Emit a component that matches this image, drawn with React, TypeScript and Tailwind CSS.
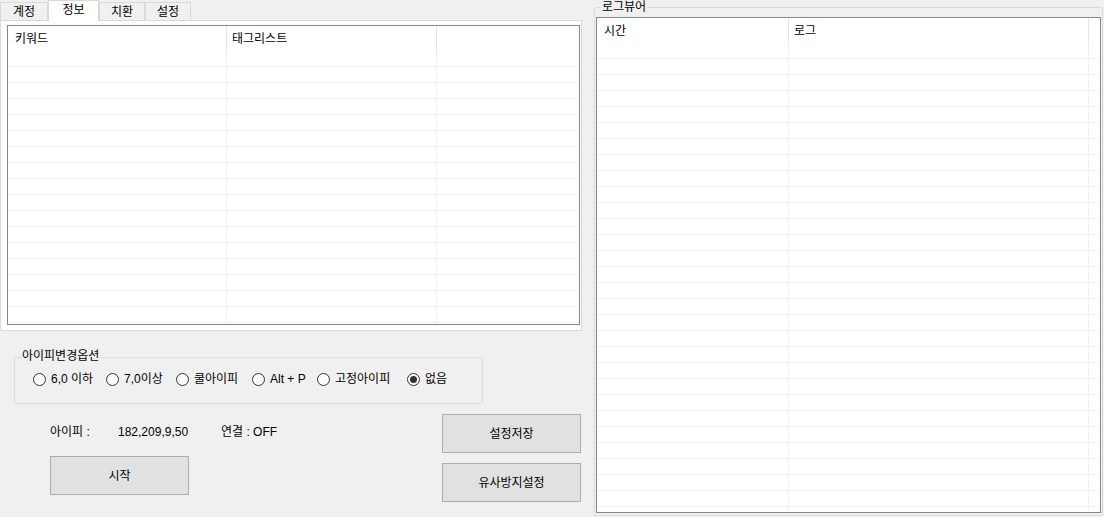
const leftRows = Array.from({ length: 18 });
const rightRows = Array.from({ length: 31 });

const radios = [
  { label: "6,0 이하", w: "w-[73px]" },
  { label: "7,0이상", w: "w-[70px]" },
  { label: "쿨아이피", w: "w-[76px]" },
  { label: "Alt + P", w: "w-[65px]" },
  { label: "고정아이피", w: "w-[90px]" },
  { label: "없음", w: "w-[60px]", checked: true },
];

function Tab({ label, active, w }: { label: string; active?: boolean; w: string }) {
  if (active) {
    return (
      <div
        className={`${w} relative z-10 -mb-px flex h-[21px] items-start justify-center border border-b-0 border-[#d9d9d9] bg-white pt-[3px] leading-[12px]`}
      >
        {label}
      </div>
    );
  }
  return (
    <div
      className={`${w} flex h-[18px] items-center justify-center border border-b-0 border-[#d9d9d9] bg-[#f0f0f0] pt-px leading-[12px]`}
    >
      {label}
    </div>
  );
}

function Button({ label }: { label: string }) {
  return (
    <div className="flex h-[39px] w-[139px] items-center justify-center border border-[#adadad] bg-[#e1e1e1] leading-[12px]">
      {label}
    </div>
  );
}

function Radio({ checked }: { checked?: boolean }) {
  return (
    <span className="flex h-[13px] w-[13px] shrink-0 items-center justify-center rounded-full border border-[#333333] bg-white">
      {checked && <span className="h-[7px] w-[7px] rounded-full bg-[#333333]" />}
    </span>
  );
}

export default function App() {
  return (
    <div className="flex h-[517px] w-[1104px] overflow-hidden bg-[#f0f0f0] font-['Liberation_Sans','Noto_Sans_CJK_KR',sans-serif] text-[12px] text-black">
      {/* left side */}
      <div className="flex w-[583px] shrink-0 flex-col">
        <div className="flex h-[20px] items-end">
          <Tab label="계정" w="w-[48px]" />
          <Tab label="정보" w="w-[51px]" active />
          <Tab label="치환" w="w-[46px]" />
          <Tab label="설정" w="w-[46px]" />
        </div>

        <div className="h-[311px] w-[582px] border border-[#d9d9d9] bg-white pl-[6px] pt-[4px]">
          <div className="h-[300px] w-[573px] overflow-hidden border border-[#828790] bg-white">
            <div className="flex h-[25px]">
              <div className="w-[219px] shrink-0 border-r border-[#e5e5e5] pl-[7px] pt-[7px] leading-[12px]">키워드</div>
              <div className="w-[210px] shrink-0 border-r border-[#e5e5e5] pl-[5px] pt-[7px] leading-[12px]">태그리스트</div>
              <div className="flex-1" />
            </div>
            {leftRows.map((_, i) => (
              <div key={i} className="flex h-[16px] border-b border-[#f0f0f0]">
                <div className="w-[219px] shrink-0 border-r border-[#f0f0f0]" />
                <div className="w-[210px] shrink-0 border-r border-[#f0f0f0]" />
                <div className="flex-1" />
              </div>
            ))}
          </div>
        </div>

        <div className="relative ml-[14px] mt-[26px] h-[47px] w-[469px] rounded-[2px] border border-[#dcdcdc] pl-[18px] pt-[13px]">
          <span className="absolute -top-[8px] left-[7px] bg-[#f0f0f0] pr-[1px] leading-[12px]">아이피변경옵션</span>
          <div className="flex h-[16px] items-center">
            {radios.map((r) => (
              <div key={r.label} className={`${r.w} flex shrink-0 items-center gap-[5px]`}>
                <Radio checked={r.checked} />
                <span className="whitespace-nowrap leading-[12px]">{r.label}</span>
              </div>
            ))}
          </div>
        </div>

        <div className="mt-[10px] flex">
          <div className="w-[442px] shrink-0 pl-[50px]">
            <div className="mt-[10px] flex h-[16px] items-center leading-[12px]">
              <span className="w-[68px] shrink-0">아이피 :</span>
              <span className="w-[103px] shrink-0">182,209,9,50</span>
              <span>연결 : OFF</span>
            </div>
            <div className="mt-[16px]">
              <Button label="시작" />
            </div>
          </div>
          <div className="flex flex-col gap-[10px]">
            <Button label="설정저장" />
            <Button label="유사방지설정" />
          </div>
        </div>
      </div>

      {/* right side: log viewer */}
      <div className="ml-[11px] pt-[7px]">
        <div className="relative h-[509px] w-[509px] rounded-[2px] border border-[#dcdcdc] pl-[1px] pt-[9px]">
          <span className="absolute -top-[7px] left-[6px] bg-[#f0f0f0] px-[1px] leading-[12px]">로그뷰어</span>
          <div className="h-[496px] w-[505px] overflow-hidden border border-[#828790] bg-white">
            <div className="flex h-[25px]">
              <div className="w-[192px] shrink-0 border-r border-[#e5e5e5] pl-[7px] pt-[7px] leading-[12px]">시간</div>
              <div className="w-[300px] shrink-0 border-r border-[#e5e5e5] pl-[5px] pt-[7px] leading-[12px]">로그</div>
              <div className="flex-1" />
            </div>
            {rightRows.map((_, i) => (
              <div key={i} className="flex h-[16px] border-b border-[#f0f0f0]">
                <div className="w-[192px] shrink-0 border-r border-[#f0f0f0]" />
                <div className="w-[300px] shrink-0 border-r border-[#f0f0f0]" />
                <div className="flex-1" />
              </div>
            ))}
          </div>
        </div>
      </div>
    </div>
  );
}
